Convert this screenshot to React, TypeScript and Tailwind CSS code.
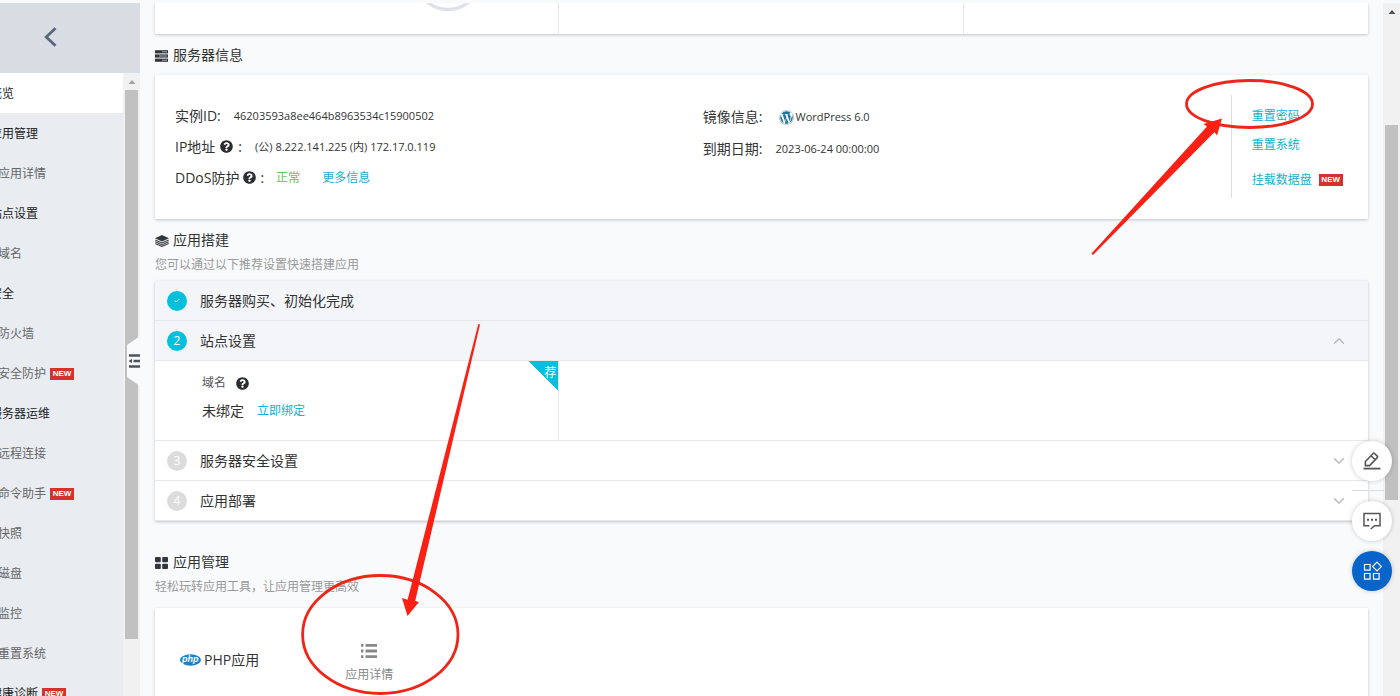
import type { ReactNode } from 'react';
import { FaQuestionCircle, FaWordpress } from 'react-icons/fa';
import { ChevronDown, ChevronUp } from 'lucide-react';

type NavItem = { label: string; child?: boolean; isNew?: boolean; active?: boolean };

const navItems: NavItem[] = [
  { label: '概览', active: true },
  { label: '应用管理' },
  { label: '应用详情', child: true },
  { label: '站点设置' },
  { label: '域名', child: true },
  { label: '安全' },
  { label: '防火墙', child: true },
  { label: '安全防护', child: true, isNew: true },
  { label: '服务器运维' },
  { label: '远程连接', child: true },
  { label: '命令助手', child: true, isNew: true },
  { label: '快照', child: true },
  { label: '磁盘', child: true },
  { label: '监控', child: true },
  { label: '重置系统', child: true },
  { label: '健康诊断', isNew: true },
];

function NewBadge() {
  return (
    <span className="inline-block h-3 w-6 shrink-0 bg-[#d6322d] text-center font-['Liberation_Sans',sans-serif] text-[8px] leading-3 font-bold text-white">
      NEW
    </span>
  );
}

function ServerIcon() {
  return (
    <svg width="13" height="12" viewBox="0 0 13 12" fill="#33363b" aria-hidden="true">
      <rect width="13" height="3.2" y="0.2" />
      <rect width="13" height="3.2" y="4.4" />
      <rect width="13" height="3.2" y="8.6" />
      <path d="M7 1.8h5M4 6h8M7 10.2h5" stroke="#a9adb3" strokeWidth="0.9" />
    </svg>
  );
}

function LayersIcon() {
  return (
    <svg width="14" height="12" viewBox="0 0 14 12" fill="#33363b" aria-hidden="true">
      <path d="M7 0 14 3.3 7 6.6 0 3.3Z" />
      <path
        d="M0.3 5 7 8.1 13.7 5M0.3 6.8 7 9.9 13.7 6.8M0.3 8.6 7 11.5 13.7 8.6"
        fill="none"
        stroke="#44474c"
        strokeWidth="1.1"
      />
    </svg>
  );
}

function GridIcon() {
  return (
    <svg width="13" height="12" viewBox="0 0 13 12" fill="#33363b" aria-hidden="true">
      <rect width="5.8" height="5.3" rx="1" />
      <rect x="7.2" width="5.8" height="5.3" rx="1" />
      <rect y="6.7" width="5.8" height="5.3" rx="1" />
      <rect x="7.2" y="6.7" width="5.8" height="5.3" rx="1" />
    </svg>
  );
}

function SectionHead({ icon, title, note }: { icon: ReactNode; title: string; note?: string }) {
  return (
    <header className="pt-[10px] pb-2">
      <h2 className="flex items-center gap-1 text-sm leading-[22px]">
        <span className="flex w-[14px] pt-[2px]">{icon}</span>
        {title}
      </h2>
      {note && <p className="mt-[6px] text-xs leading-4 text-[#999]">{note}</p>}
    </header>
  );
}

function Help() {
  return (
    <button type="button" aria-label="帮助" className="text-[#2b2d30]">
      <FaQuestionCircle size={13} />
    </button>
  );
}

function TextLink({ children }: { children: ReactNode }) {
  return (
    <a href="#" className="text-[12px] text-[#12b2cc]">
      {children}
    </a>
  );
}

function Step({
  mark,
  title,
  done,
  chevron,
}: {
  mark: ReactNode;
  title: string;
  done?: boolean;
  chevron?: 'up' | 'down';
}) {
  return (
    <button
      type="button"
      className={`flex h-10 w-full items-center border-b border-[#e6e8ec] pr-5 pl-3 text-left text-sm ${
        done ? 'bg-[#f4f5f9]' : 'bg-white'
      }`}
    >
      <span
        className={`mr-[13px] flex size-5 items-center justify-center rounded-full text-xs text-white ${
          done ? 'bg-[#05c0dc]' : 'bg-[#dcdcdc]'
        }`}
      >
        {mark}
      </span>
      <span className="grow">{title}</span>
      {chevron === 'up' && <ChevronUp size={18} color="#bbb" strokeWidth={2} />}
      {chevron === 'down' && <ChevronDown size={18} color="#bbb" strokeWidth={2} />}
    </button>
  );
}

function Sidebar() {
  return (
    <aside className="relative flex w-[140px] shrink-0 flex-col overflow-hidden">
      <button
        type="button"
        aria-label="返回"
        className="flex h-[70px] shrink-0 items-center justify-center bg-[#d8dce3] pr-10 pb-[2px]"
      >
        <svg width="13" height="20" viewBox="0 0 13 20" fill="none" aria-hidden="true">
          <path d="M11.5 1.2 2.2 10l9.3 8.8" stroke="#59677d" strokeWidth="2.8" />
        </svg>
      </button>
      <div className="flex min-h-0 grow">
        <nav className="grow overflow-hidden bg-[#e9ecf1]">
          <ul>
            {navItems.map((item) => (
              <li key={item.label + String(item.child)} className={item.active ? 'bg-white' : ''}>
                <a
                  href="#"
                  className={`-ml-[10px] flex h-10 items-center gap-1 pt-[2px] text-xs whitespace-nowrap ${
                    item.child ? 'pl-2 text-[#666]' : 'text-[#222]'
                  }`}
                >
                  {item.label}
                  {item.isNew && <NewBadge />}
                </a>
              </li>
            ))}
          </ul>
        </nav>
        <div className="flex w-[17px] shrink-0 flex-col items-center bg-[#f1f1f1]">
          <svg width="8" height="17" viewBox="0 0 8 17" aria-hidden="true">
            <path d="M0.5 11 4 7l3.5 4Z" fill="#a3a3a3" />
          </svg>
          <div className="h-[549px] w-[13px] bg-[#c1c1c1]" />
        </div>
      </div>
      <button type="button" aria-label="收起菜单" className="absolute top-[333px] right-0">
        <svg width="13" height="50" viewBox="0 0 13 50" aria-hidden="true">
          <path d="M13 0 0 9v32l13 9Z" fill="#f8fafc" />
          <path d="M2 19.5h11M6.5 25H13M2 30.5h11" stroke="#4c5361" strokeWidth="2.4" />
          <path d="M5 22.7v4.6L1.6 25Z" fill="#4c5361" />
        </svg>
      </button>
    </aside>
  );
}

function ServerInfo() {
  return (
    <section>
      <SectionHead icon={<ServerIcon />} title="服务器信息" />
      <div className="mt-px grid grid-cols-[45%_45%_10%] bg-white px-5 pt-5 pb-[21px] shadow-[0_1px_3px_rgba(0,0,0,0.22)]">
        <dl className="py-[5px] text-sm leading-[31px]">
          <div className="flex items-center">
            <dt>实例ID:</dt>
            <dd className="ml-[13px] text-[11px]">46203593a8ee464b8963534c15900502</dd>
          </div>
          <div className="flex items-center">
            <dt className="flex items-center gap-[5px]">
              IP地址 <Help /> :
            </dt>
            <dd className="ml-[13px] text-[11px]">(公) 8.222.141.225 (内) 172.17.0.119</dd>
          </div>
          <div className="flex items-center">
            <dt className="flex items-center gap-1">
              DDoS防护 <Help /> :
            </dt>
            <dd className="ml-3 flex items-center gap-[22px] text-[12px] text-[#5cc46c]">
              正常 <TextLink>更多信息</TextLink>
            </dd>
          </div>
        </dl>
        <dl className="pt-[6px] text-sm leading-8">
          <div className="flex items-center">
            <dt>镜像信息:</dt>
            <dd className="ml-4 flex items-center gap-[2px] text-[11px]">
              <FaWordpress size={15} color="#21759b" />
              WordPress 6.0
            </dd>
          </div>
          <div className="flex items-center">
            <dt>到期日期:</dt>
            <dd className="ml-[13px] text-[11px]">2023-06-24 00:00:00</dd>
          </div>
        </dl>
        <ul className="flex flex-col border-l border-[#ddd] pt-[6px] pl-5 text-[12px] leading-[29px] whitespace-nowrap">
          <li>
            <TextLink>重置密码</TextLink>
          </li>
          <li>
            <TextLink>重置系统</TextLink>
          </li>
          <li className="mt-[11px] flex items-center gap-[7px] leading-5">
            <TextLink>挂载数据盘</TextLink>
            <NewBadge />
          </li>
        </ul>
      </div>
    </section>
  );
}

function AppSetup() {
  return (
    <section>
      <SectionHead icon={<LayersIcon />} title="应用搭建" note="您可以通过以下推荐设置快速搭建应用" />
      <div className="bg-white shadow-[0_1px_3px_rgba(0,0,0,0.22)]">
        <Step
          done
          title="服务器购买、初始化完成"
          mark={
            <svg width="6" height="5" viewBox="0 0 8 6" fill="none" aria-hidden="true">
              <path d="M1 3l2 2 4-4" stroke="#fff" strokeWidth="1.3" />
            </svg>
          }
        />
        <Step done title="站点设置" mark="2" chevron="up" />
        <div className="grid grid-cols-3 border-b border-[#e6e8ec]">
          <div className="relative border-r border-[#e6e8ec] pt-2 pb-[15px] pl-[47px] leading-7">
            <div className="flex items-center gap-[10px] text-[12px] text-[#555]">
              域名 <Help />
            </div>
            <div className="flex items-center gap-[13px] text-[14px]">
              未绑定 <TextLink>立即绑定</TextLink>
            </div>
            <span className="absolute top-0 right-0 h-[30px] w-[30px] bg-[linear-gradient(to_top_right,transparent_50%,#05c0dc_50%)] pr-[2px] text-right text-xs leading-6 text-white">
              荐
            </span>
          </div>
        </div>
        <Step title="服务器安全设置" mark="3" chevron="down" />
        <Step title="应用部署" mark="4" chevron="down" />
      </div>
    </section>
  );
}

function AppManage() {
  return (
    <section className="mt-5">
      <SectionHead icon={<GridIcon />} title="应用管理" note="轻松玩转应用工具，让应用管理更高效" />
      <div className="mt-[5px] flex items-start gap-[86px] bg-white px-[25px] pt-[35px] pb-7 shadow-[0_1px_3px_rgba(0,0,0,0.22)]">
        <div className="flex items-center gap-[3px] pt-[7px] text-sm">
          <svg width="21" height="12" viewBox="0 0 21 12" aria-hidden="true">
            <ellipse cx="10.5" cy="6" rx="10.5" ry="5.8" fill="#1b82c8" />
            <text
              x="10.3"
              y="8.2"
              textAnchor="middle"
              fill="#fff"
              className="font-['Liberation_Sans',sans-serif] text-[9px] font-bold italic"
            >
              php
            </text>
          </svg>
          PHP应用
        </div>
        <a href="#" className="flex flex-col items-center gap-2 text-xs text-[#888]">
          <svg width="16" height="16" viewBox="0 0 16 16" fill="#888" aria-hidden="true">
            <path d="M0 1h2.4v2.8H0zM4.5 1H16v2.8H4.5zM0 6.6h2.4v2.8H0zM4.5 6.6H16v2.8H4.5zM0 12.2h2.4V15H0zM4.5 12.2H16V15H4.5z" />
          </svg>
          应用详情
        </a>
      </div>
    </section>
  );
}

function FloatingTools() {
  return (
    <div className="absolute top-[441px] right-2 flex flex-col items-start">
      <button
        type="button"
        aria-label="编辑"
        className="flex size-10 items-center justify-center rounded-full bg-white shadow-[0_0_5px_rgba(0,0,0,0.2)]"
      >
        <svg width="18" height="18" viewBox="0 0 18 18" fill="none" stroke="#555" strokeWidth="1.6" aria-hidden="true">
          <path d="M0.5 16.6h17" strokeWidth="1.8" />
          <path d="M2.4 13.6V9.5l7.7-8q.7-.7 1.4 0l2.8 2.7q.7.7 0 1.4l-7.7 8ZM8 3.7l4.2 4.1" />
        </svg>
      </button>
      <div className="mt-[9px] mb-[10px] h-px w-8 bg-[#d8dbe2]" />
      <button
        type="button"
        aria-label="消息"
        className="flex size-10 items-center justify-center rounded-full bg-white shadow-[0_0_5px_rgba(0,0,0,0.2)]"
      >
        <svg width="18" height="18" viewBox="0 0 18 18" fill="none" stroke="#555" strokeWidth="1.5" aria-hidden="true">
          <path d="M6.5 13.7H1V1.5h16v12.2h-5.5L7.8 17" />
          <path d="M4 7.7h2M8 7.7h2M12 7.7h2" strokeWidth="2" />
        </svg>
      </button>
      <button
        type="button"
        aria-label="应用"
        className="mt-[10px] flex size-10 items-center justify-center rounded-full bg-[#0764c8] shadow-[0_0_5px_rgba(0,0,0,0.2)]"
      >
        <svg width="20" height="20" viewBox="0 0 20 20" fill="none" stroke="#fff" strokeWidth="1.2" aria-hidden="true">
          <path d="M2.5 3.5h5.6v5.6H2.5zM2.5 12.5h5.6v5.6H2.5zM11.5 12.5h5.6v5.6h-5.6zM15 1.2l4.4 4.4L15 10l-4.4-4.4z" />
        </svg>
      </button>
    </div>
  );
}

function Annotations() {
  return (
    <svg className="pointer-events-none absolute inset-0 h-full w-full" aria-hidden="true">
      <g fill="none" stroke="#f0251a" strokeWidth="2.8">
        <ellipse cx="1249.5" cy="104" rx="63" ry="23.5" />
        <ellipse cx="380.3" cy="634.5" rx="77.7" ry="59" />
      </g>
      <g fill="#fb2014">
        <path d="M1091.5 253.5 1207 126.5 1203.5 124 1222 118.5 1217 135.5 1214.5 132 1093 255Z" />
        <path d="M478.3 324 407.6 599.8 402 598 407.5 616 419 602 415.2 601 480 324.5Z" />
      </g>
    </svg>
  );
}

export default function App() {
  return (
    <div className="relative flex h-screen overflow-hidden bg-[#f8fafc] pt-[3px] font-['Open_Sans','Noto_Sans_CJK_SC',sans-serif] text-[#333]">
      <Sidebar />
      <main className="min-w-0 grow overflow-hidden px-[15px]">
        <div className="grid h-[31px] grid-cols-3 bg-white shadow-[0_1px_3px_rgba(0,0,0,0.22)]">
          <div className="border-r border-[#e6e8ec] pl-[269px]">
            <svg width="48" height="9" viewBox="0 0 48 9" aria-hidden="true">
              <circle cx="24" cy="-25.5" r="32" fill="none" stroke="#dde2ec" strokeWidth="3.4" />
            </svg>
          </div>
          <div className="border-r border-[#e6e8ec]" />
        </div>
        <ServerInfo />
        <AppSetup />
        <AppManage />
      </main>
      <div className="flex w-[17px] shrink-0 flex-col items-center bg-[#f1f1f1]">
        <svg width="8" height="17" viewBox="0 0 8 17" aria-hidden="true">
          <path d="M0.5 11 4 7l3.5 4Z" fill="#505050" />
        </svg>
        <div className="mt-[105px] h-[375px] w-[13px] bg-[#c1c1c1]" />
      </div>
      <FloatingTools />
      <Annotations />
    </div>
  );
}
